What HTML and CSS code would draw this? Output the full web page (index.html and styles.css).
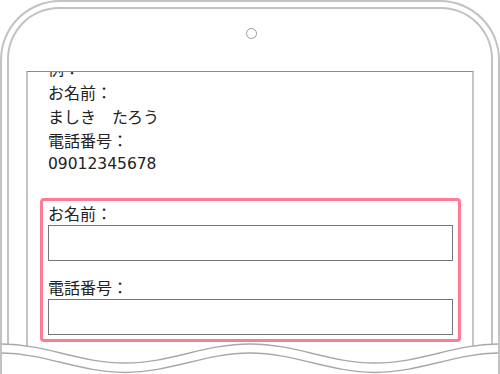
FILE: index.html
```
<!DOCTYPE html>
<html lang="ja">
  <head>
    <meta charset="utf-8" />
    <title>入力フォーム</title>
    <link rel="stylesheet" href="styles.css">
  </head>
  <body>
    <div class="phone">
      <div class="bezel">
        <div class="top">
          <span class="camera"></span>
        </div>
        <div class="screen">
          <div class="screen-inner">
            <div class="example">
              <p>例：</p>
              <p>お名前：</p>
              <p>ましき　たろう</p>
              <p>電話番号：</p>
              <p class="tel">09012345678</p>
            </div>
            <form class="entry-box">
              <label for="name">お名前：</label>
              <input id="name" type="text" class="text-input">
              <label for="tel" class="second">電話番号：</label>
              <input id="tel" type="text" class="text-input">
            </form>
          </div>
        </div>
      </div>
      <svg class="wave" width="500" height="40" viewBox="0 0 500 40">
        <path d="M0 10 C45.5 10 79.5 29 125 29 S204.5 10 250 10 S329.5 29 375 29 S454.5 10 500 10 L500 40 L0 40 Z" fill="#fff"/>
        <path d="M0 10 C45.5 10 79.5 29 125 29 S204.5 10 250 10 S329.5 29 375 29 S454.5 10 500 10" fill="none" stroke="#a8a8a8" stroke-width="1.3"/>
        <path d="M0 19 C45.5 19 79.5 38.5 125 38.5 S204.5 19 250 19 S329.5 38.5 375 38.5 S454.5 19 500 19" fill="none" stroke="#a8a8a8" stroke-width="1.3"/>
      </svg>
    </div>
  </body>
</html>
```
FILE: styles.css
```
body {
  margin: 0;
  padding: 0;
  background-color: #fff;
  font-family: "Noto Sans CJK JP", sans-serif;
  color: #222;
  overflow: hidden;
}

.phone {
  position: relative;
  width: 500px;
  height: 374px;
  box-sizing: border-box;
  border: 2px solid #c2c2c2;
  border-bottom: none;
  border-radius: 60px 60px 0 0;
  padding: 5px 5px 0 5px;
  overflow: hidden;
}

.bezel {
  height: 100%;
  box-sizing: border-box;
  border: 2px solid #c2c2c2;
  border-bottom: none;
  border-radius: 52px 52px 0 0;
  padding: 0 17px;
  display: flex;
  flex-direction: column;
}

.top {
  height: 62px;
  box-sizing: border-box;
  padding-top: 19px;
  display: flex;
  justify-content: center;
}

.camera {
  width: 11px;
  height: 11px;
  box-sizing: border-box;
  border: 1px solid #9a9a9a;
  border-radius: 50%;
  margin-left: 2px;
}

.screen {
  flex: 1;
  border-top: 1px solid #8c8c8c;
  border-left: 2px solid #c6c6c6;
  border-right: 2px solid #c6c6c6;
  overflow: hidden;
}

.screen-inner {
  margin-top: -16px;
  padding: 0 11px 0 12px;
}

.example {
  padding-left: 8px;
}

.example p {
  margin: 0;
  font-size: 16px;
  line-height: 24px;
}

.example .tel {
  font-family: "DejaVu Sans", "Noto Sans CJK JP", sans-serif;
  font-size: 15.5px;
}

.entry-box {
  margin-top: 22px;
  border: 3px solid #ff7a93;
  border-radius: 4px;
  padding: 0 5px 4px 5px;
  display: flex;
  flex-direction: column;
}

.entry-box label {
  font-size: 16px;
  line-height: 24px;
}

.entry-box .second {
  margin-top: 14px;
}

.text-input {
  height: 36px;
  box-sizing: border-box;
  margin: 0;
  border: 1px solid #767676;
  font-size: 16px;
}

.wave {
  position: absolute;
  left: -2px;
  bottom: 0;
  display: block;
}
```
